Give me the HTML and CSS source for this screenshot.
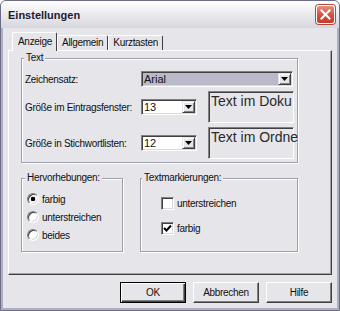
FILE: index.html
```html
<!DOCTYPE html>
<html lang="de">
<head>
<meta charset="utf-8">
<title>Einstellungen</title>
<link rel="stylesheet" href="styles.css">
</head>
<body>
<div class="window">
  <div class="titlebar">
    <span class="title">Einstellungen</span>
    <span class="close"><svg width="11" height="11" viewBox="0 0 11 11"><path d="M1.5 1.5 L9.5 9.5 M9.5 1.5 L1.5 9.5" stroke="#fff" stroke-width="2" stroke-linecap="square"/></svg></span>
  </div>
  <div class="client">
    <div class="tabs">
      <div class="tab active">Anzeige</div>
      <div class="tab">Allgemein</div>
      <div class="tab">Kurztasten</div>
    </div>
    <div class="panel">
      <div class="group group-text">
        <div class="legend legend-text">Text</div>
        <div class="text-grid">
          <div class="label">Zeichensatz:</div>
          <div class="combo combo-wide selected"><span class="val">Arial</span><span class="drop"></span></div>
          <div class="label">Größe im Eintragsfenster:</div>
          <div class="combo"><span class="val">13</span><span class="drop"></span></div>
          <div class="preview">Text im Doku</div>
          <div class="label">Größe in Stichwortlisten:</div>
          <div class="combo"><span class="val">12</span><span class="drop"></span></div>
          <div class="preview">Text im Ordne</div>
        </div>
      </div>
      <div class="row">
        <div class="group group-hv">
          <div class="legend legend-hv">Hervorhebungen:</div>
          <div class="opt"><span class="radio checked"></span><span>farbig</span></div>
          <div class="opt"><span class="radio"></span><span>unterstreichen</span></div>
          <div class="opt"><span class="radio"></span><span>beides</span></div>
        </div>
        <div class="group group-tm">
          <div class="legend legend-tm">Textmarkierungen:</div>
          <div class="opt"><span class="check"></span><span>unterstreichen</span></div>
          <div class="opt opt-gap"><span class="check"><svg width="9" height="9" viewBox="0 0 9 9"><path d="M1 4 L3.5 6.5 L8 1.5" fill="none" stroke="#000" stroke-width="2"/></svg></span><span>farbig</span></div>
        </div>
      </div>
    </div>
    <div class="buttons">
      <div class="btn default">OK</div>
      <div class="btn">Abbrechen</div>
      <div class="btn">Hilfe</div>
    </div>
  </div>
</div>
</body>
</html>
```

FILE: styles.css
```css
body {
  margin: 0;
  font-family: "Liberation Sans", Arial, sans-serif;
  font-size: 10px;
  letter-spacing: -0.3px;
  color: #111;
}

.window {
  width: 340px;
  height: 311px;
  box-sizing: border-box;
  border: 1px solid #6c6c84;
  border-radius: 6px 6px 0 0;
  background: #aeaec2;
  display: flex;
  flex-direction: column;
  overflow: hidden;
}

.titlebar {
  height: 27px;
  flex: none;
  display: flex;
  align-items: center;
  justify-content: space-between;
  padding: 0 4px 0 7px;
  background: linear-gradient(#ffffff, #ececf0 45%, #d6d6de);
}

.title {
  font-size: 11px;
  font-weight: bold;
  letter-spacing: 0;
  color: #1c1c30;
}

.close {
  width: 19px;
  height: 19px;
  box-sizing: border-box;
  border: 1px solid #fff;
  border-radius: 3px;
  background: linear-gradient(#e8907e, #d4503a 55%, #c43e2a);
  box-shadow: 0 0 0 1px #b04a3c;
  display: flex;
  align-items: center;
  justify-content: center;
}

.client {
  flex: 1;
  margin: 0 2px 2px;
  background: #e5e5ea;
  display: flex;
  flex-direction: column;
}

.tabs {
  height: 22px;
  flex: none;
  box-sizing: border-box;
  display: flex;
  align-items: flex-end;
  padding-left: 9px;
  position: relative;
  z-index: 2;
}

.tab {
  height: 15px;
  line-height: 14px;
  box-sizing: border-box;
  padding: 0 4px;
  border: 1px solid;
  border-color: #fff #404040 transparent #fff;
  border-bottom: none;
  border-radius: 2px 2px 0 0;
  background: #e5e5ea;
}

.tab.active {
  height: 19px;
  line-height: 17px;
  margin-bottom: -1px;
  padding: 0 4px 0 5px;
  position: relative;
  z-index: 3;
}

.panel {
  height: 225px;
  flex: none;
  margin: 0 5px;
  box-sizing: border-box;
  border: 1px solid;
  border-color: #fff #404040 #404040 #fff;
  box-shadow: inset -1px -1px #a0a0a8;
}

.group {
  box-sizing: border-box;
  border: 1px solid #a0a0ac;
  box-shadow: inset 1px 1px #fff, 1px 1px #fff;
}

.legend {
  width: fit-content;
  line-height: 12px;
  padding: 0 2px;
  background: #e5e5ea;
}

.group-text {
  width: 277px;
  margin: 7px 0 0 12px;
  padding: 0 3px 3px;
}

.legend-text {
  margin: -7px 0 7px -1px;
}

.text-grid {
  display: grid;
  grid-template-columns: 116px 56px 11px 86px;
  grid-template-rows: 16px 32px 32px;
  row-gap: 4px;
  align-items: center;
}

.label {
  grid-column: 1;
  white-space: nowrap;
}

.combo {
  grid-column: 2;
  height: 16px;
  box-sizing: border-box;
  border: 1px solid;
  border-color: #808080 #fff #fff #808080;
  box-shadow: inset 1px 1px #404040, inset -1px -1px #d8d8dc;
  background: #fff;
  display: flex;
  align-items: center;
  padding: 1px 1px 1px 2px;
}

.combo-wide {
  grid-column: 2 / 5;
  width: 152px;
}

.combo.selected {
  background: #b9b9ca;
}

.val {
  flex: 1;
  font-size: 11px;
  letter-spacing: 0;
  line-height: 12px;
}

.drop {
  width: 13px;
  height: 12px;
  box-sizing: border-box;
  background: #e5e5ea;
  border: 1px solid;
  border-color: #e5e5ea #404040 #404040 #e5e5ea;
  box-shadow: inset 1px 1px #fff, inset -1px -1px #808080;
  display: flex;
  align-items: center;
  justify-content: center;
}

.drop::after {
  content: "";
  width: 7px;
  height: 4px;
  background: #000;
  clip-path: polygon(0 0, 100% 0, 50% 100%);
}

.preview {
  grid-column: 4;
  height: 32px;
  box-sizing: border-box;
  border: 1px solid;
  border-color: #808080 #fff #fff #808080;
  box-shadow: inset 1px 1px #404040;
  white-space: nowrap;
  font-size: 14px;
  letter-spacing: 0;
  line-height: 16px;
  padding: 1px 0 0 2px;
  color: #2a2a2a;
}

.row {
  display: flex;
  gap: 17px;
  margin: 15px 0 0 12px;
}

.group-hv {
  width: 102px;
  padding: 0 0 7px 5px;
}

.legend-hv {
  margin: -7px 0 6px -2px;
}

.group-tm {
  width: 158px;
  padding: 0 0 14px 20px;
}

.legend-tm {
  margin: -7px 0 10px -19px;
}

.opt {
  height: 18px;
  display: flex;
  align-items: center;
  gap: 3px;
}

.opt-gap {
  margin-top: 7px;
}

.radio {
  width: 12px;
  height: 12px;
  box-sizing: border-box;
  border-radius: 50%;
  border: 1px solid;
  border-color: #808080 #fff #fff #808080;
  box-shadow: inset 1px 1px #404040, inset -1px -1px #d8d8dc;
  background: #fff;
}

.radio.checked {
  background: radial-gradient(circle, #000 0 2px, #fff 2.6px);
}

.check {
  width: 13px;
  height: 13px;
  box-sizing: border-box;
  border: 1px solid;
  border-color: #808080 #fff #fff #808080;
  box-shadow: inset 1px 1px #404040, inset -1px -1px #d8d8dc;
  background: #fff;
  display: flex;
  align-items: center;
  justify-content: center;
}

.buttons {
  display: flex;
  justify-content: flex-end;
  gap: 7px;
  margin-top: 7px;
  padding-right: 5px;
}

.btn {
  width: 66px;
  height: 21px;
  box-sizing: border-box;
  border: 1px solid;
  border-color: #fff #404040 #404040 #fff;
  box-shadow: inset -1px -1px #808080;
  background: #e5e5ea;
  display: flex;
  align-items: center;
  justify-content: center;
}

.btn.default {
  border-color: #000;
  box-shadow: inset 1px 1px #fff, inset -1px -1px #404040, inset -2px -2px #808080;
}
```
